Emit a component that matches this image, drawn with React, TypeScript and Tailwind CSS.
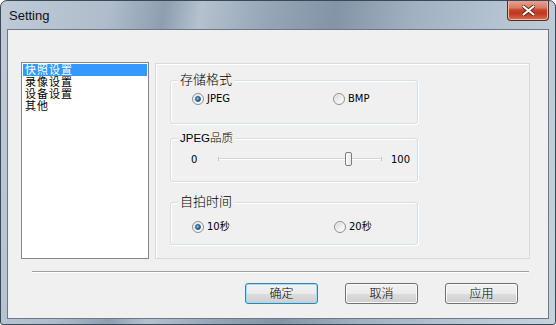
import React from 'react';

const font = "font-['Liberation_Sans','Noto_Sans_CJK_SC',sans-serif]";
const small = "font-['DejaVu_Sans','Noto_Sans_CJK_SC',sans-serif]";

const Radio: React.FC<{ checked?: boolean; label: string }> = ({ checked, label }) => (
  <div className="flex items-center gap-[3px]">
    <span className="w-[12px] h-[12px] rounded-full border border-[#8e8f8f] bg-[linear-gradient(135deg,#d4d4d4,#f7f7f7_70%,#ffffff)] flex items-center justify-center shadow-[inset_0_0_0_1px_#f4f4f4]">
      {checked && (
        <span className="w-[6px] h-[6px] rounded-full bg-[radial-gradient(circle_at_35%_35%,#8ed0f5,#2b78b4_55%,#0e3f6c)] border border-[#1b5584]" />
      )}
    </span>
    <span className={`${small} text-[10px] leading-[13px] text-black font-normal`}>{label}</span>
  </div>
);

const Group: React.FC<{
  title: string;
  titleSize: string;
  className: string;
  children: React.ReactNode;
}> = ({ title, titleSize, className, children }) => (
  <div
    className={`relative w-[248px] border border-[#d5dfe5] rounded-[3px] shadow-[inset_1px_1px_0_#ffffff,1px_1px_0_#ffffff] ${className}`}
  >
    <span
      className={`absolute left-[7px] -top-[8px] px-[2px] bg-[#f0f0f0] leading-[14px] text-black font-light ${titleSize}`}
    >
      {title}
    </span>
    {children}
  </div>
);

const Button: React.FC<{ label: string; primary?: boolean }> = ({ label, primary }) => (
  <button
    className={`w-[73px] h-[21px] rounded-[3px] border text-[12px] leading-[12px] text-black font-light bg-[linear-gradient(#f2f2f2_0%,#ebebeb_50%,#dddddd_50%,#cfcfcf_100%)] ${
      primary
        ? 'border-[#3c7fb1] shadow-[inset_0_0_0_1px_#9ddcf8]'
        : 'border-[#707070] shadow-[inset_0_0_0_1px_#fbfbfb]'
    }`}
  >
    {label}
  </button>
);

const items = ['快照设置', '录像设置', '设备设置', '其他'];

export default function App() {
  return (
    <div
      className={`${font} w-[556px] h-[325px] flex flex-col rounded-t-[7px] rounded-b-[3px] border border-[#3a4858] overflow-hidden bg-[linear-gradient(100deg,#bfcbd7_0%,#aebccb_18%,#8e9eb1_27%,#b4c1ce_33%,#96a6b8_44%,#8494a8_55%,#a1b1c2_68%,#b7c5d3_84%,#c6d2dd_100%)]`}
    >
      {/* title bar */}
      <div className="h-[28px] flex items-start justify-between pl-[8px] pr-[6px]">
        <span className="pt-[7px] text-[13px] leading-[15px] text-[#111]">Setting</span>
        <div className="-mt-[1px] w-[42px] h-[21px] rounded-b-[4px] border border-[#5b2a1e] border-t-0 bg-[linear-gradient(#e9a899_0%,#d77a63_40%,#c4422a_50%,#c23a22_70%,#d9704f_100%)] flex items-center justify-center shadow-[inset_0_0_0_1px_#f0b8a8]">
          <svg width="13" height="11" viewBox="0 0 13 11">
            <path
              d="M1.5 1.5 L11.5 9.5 M11.5 1.5 L1.5 9.5"
              stroke="#5a1f12"
              strokeWidth="3.6"
              strokeLinecap="round"
            />
            <path
              d="M1.5 1.5 L11.5 9.5 M11.5 1.5 L1.5 9.5"
              stroke="#ffffff"
              strokeWidth="2.2"
              strokeLinecap="round"
            />
          </svg>
        </div>
      </div>

      {/* client area */}
      <div className="flex-1 flex px-[6px] pb-[5px]">
        <div className="flex-1 flex flex-col bg-[#f0f0f0] border border-[#6a7888]">
          <div className="flex items-start pl-[13px] pt-[32px]">
            {/* list box */}
            <div className="w-[128px] h-[197px] border border-[#828790] bg-white pt-[1px] pl-[1px] pr-[1px]">
              {items.map((it, i) => (
                <div
                  key={it}
                  className={`h-[12px] leading-[12px] text-[11px] tracking-[1px] pl-[2px] ${
                    i === 0 ? 'bg-[#3399ff] text-white' : 'text-black'
                  }`}
                >
                  {it}
                </div>
              ))}
            </div>

            {/* right panel */}
            <div className="ml-[6px] mt-[1px] w-[375px] h-[196px] border border-[#dadada] shadow-[inset_1px_1px_0_#ffffff] pl-[14px] pt-[16px] flex flex-col">
              <Group title="存储格式" titleSize="text-[13px]" className="h-[44px] pt-[11px]">
                <div className="flex pl-[21px]">
                  <div className="w-[141px]">
                    <Radio checked label="JPEG" />
                  </div>
                  <Radio label="BMP" />
                </div>
              </Group>

              <Group title="JPEG品质" titleSize="text-[11.5px]" className="mt-[14px] h-[44px] pt-[13px]">
                <div className={`${small} flex items-center h-[14px] text-[10px] text-black font-normal`}>
                  <span className="w-[47px] pl-[20px]">0</span>
                  <div className="relative w-[164px] h-[14px] flex items-center">
                    <div className="w-full h-[2px] border-t border-[#d6d6d6] border-b border-b-white" />
                    <span className="absolute left-0 top-[5px] w-[1px] h-[4px] bg-[#c8c8c8]" />
                    <span className="absolute right-0 top-[5px] w-[1px] h-[4px] bg-[#c8c8c8]" />
                    <span className="absolute left-[127px] top-0 w-[7px] h-[14px] rounded-[2px] border border-[#7e7e7e] bg-[linear-gradient(90deg,#ffffff,#e6e6e6)]" />
                  </div>
                  <span className="pl-[9px]">100</span>
                </div>
              </Group>

              <Group title="自拍时间" titleSize="text-[13px]" className="mt-[20px] h-[43px] pt-[17px]">
                <div className="flex pl-[21px]">
                  <div className="w-[142px]">
                    <Radio checked label="10秒" />
                  </div>
                  <Radio label="20秒" />
                </div>
              </Group>
            </div>
          </div>

          {/* separator */}
          <div className="ml-[24px] mr-[19px] mt-[12px] h-[2px] border-t border-[#a0a0a0] border-b border-b-white" />

          {/* buttons */}
          <div className="flex justify-end gap-[27px] pr-[30px] mt-[10px]">
            <Button label="确定" primary />
            <Button label="取消" />
            <Button label="应用" />
          </div>
        </div>
      </div>
    </div>
  );
}
